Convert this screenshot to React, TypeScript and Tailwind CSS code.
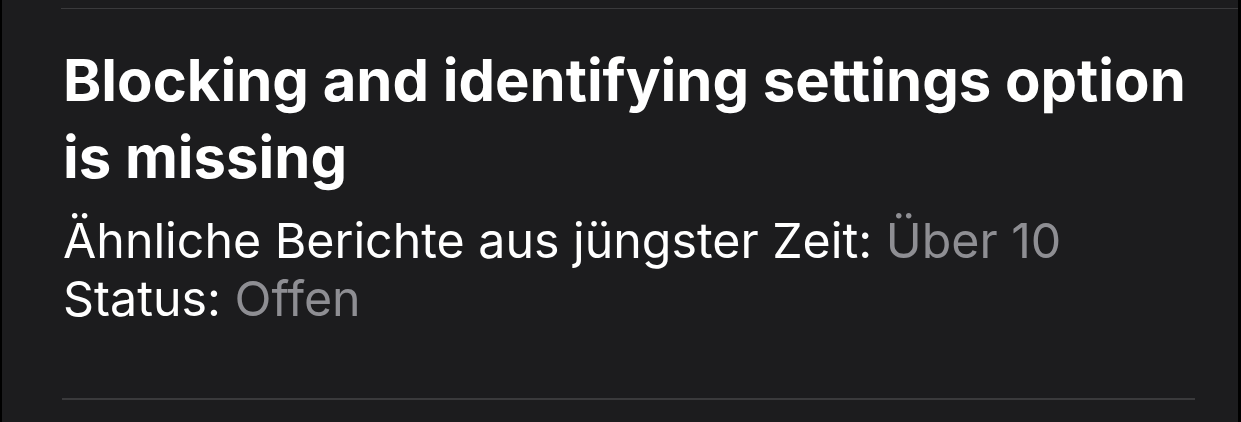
export default function App() {
  return (
    <div className="flex h-[422px] w-[1241px] bg-black" style={{ fontFamily: "Inter, 'Noto Sans', sans-serif" }}>
      <div className="ml-[2px] flex w-[1236px] flex-col bg-[#1c1c1e]">
        <div className="mt-[8px] ml-[59px] h-[1px] bg-[#3a3a3c]" />
        <div className="flex flex-col pl-[61px] pr-[30px] pt-[33px]">
          <h1 className="text-[58px] font-bold leading-[77px] text-white">
            Blocking and identifying settings option is missing
          </h1>
          <div className="mt-[16px] text-[48.3px] leading-[58px] text-white">
            <p>
              Ähnliche Berichte aus jüngster Zeit: <span className="text-[#8e8e93]">Über 10</span>
            </p>
            <p>
              Status: <span className="text-[#8e8e93]">Offen</span>
            </p>
          </div>
        </div>
        <div className="mt-auto mb-[22px] ml-[60px] mr-[43px] h-[2px] bg-[#3a3a3c]" />
      </div>
    </div>
  );
}
